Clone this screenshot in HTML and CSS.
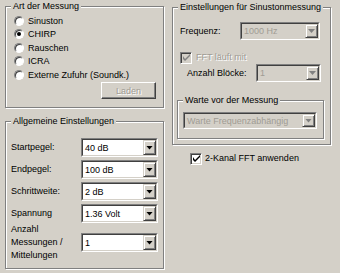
FILE: index.html
```html
<!DOCTYPE html>
<html lang="de">
<head>
<meta charset="utf-8">
<title>Messung</title>
<link rel="stylesheet" href="styles.css">
</head>
<body>
<div class="dialog">
  <div class="col col-left">
    <fieldset class="group g-art">
      <legend>Art der Messung</legend>
      <div class="radio-list">
        <div class="radio"><span class="rb"></span><span>Sinuston</span></div>
        <div class="radio"><span class="rb checked"></span><span>CHIRP</span></div>
        <div class="radio"><span class="rb"></span><span>Rauschen</span></div>
        <div class="radio"><span class="rb"></span><span>ICRA</span></div>
        <div class="radio"><span class="rb"></span><span>Externe Zufuhr (Soundk.)</span></div>
      </div>
      <div class="btn-row"><span class="button disabled">Laden</span></div>
    </fieldset>

    <fieldset class="group g-allg">
      <legend>Allgemeine Einstellungen</legend>
      <div class="form">
        <span class="lbl">Startpegel:</span>
        <div class="combo"><div class="ci"><span class="val">40 dB</span><span class="drop"><span class="arrow"></span></span></div></div>
        <span class="lbl">Endpegel:</span>
        <div class="combo"><div class="ci"><span class="val">100 dB</span><span class="drop"><span class="arrow"></span></span></div></div>
        <span class="lbl">Schrittweite:</span>
        <div class="combo"><div class="ci"><span class="val">2 dB</span><span class="drop"><span class="arrow"></span></span></div></div>
        <span class="lbl">Spannung</span>
        <div class="combo"><div class="ci"><span class="val">1.36 Volt</span><span class="drop"><span class="arrow"></span></span></div></div>
        <span class="lbl multi last">Anzahl<br>Messungen /<br>Mittelungen</span>
        <div class="combo last"><div class="ci"><span class="val">1</span><span class="drop"><span class="arrow"></span></span></div></div>
      </div>
    </fieldset>
  </div>

  <div class="col col-right">
    <fieldset class="group g-sinus">
      <legend>Einstellungen für Sinustonmessung</legend>
      <div class="sinus-body">
        <div class="row row-freq">
          <span class="lbl w-freq">Frequenz:</span>
          <div class="combo disabled c-freq"><div class="ci"><span class="val">1000 Hz</span><span class="drop"><span class="arrow"></span></span></div></div>
        </div>
        <div class="row row-fft">
          <span class="cb disabled"><svg viewBox="0 0 7 7" width="7" height="7"><path d="M0 2 L0 5 L2 7 L7 2 L7 0 L2 5 Z" class="tick"/></svg></span>
          <span class="lbl gray">FFT läuft mit</span>
        </div>
        <div class="row row-block">
          <span class="lbl w-block">Anzahl Blöcke:</span>
          <div class="combo disabled c-block"><div class="ci"><span class="val">1</span><span class="drop"><span class="arrow"></span></span></div></div>
        </div>
        <fieldset class="group g-warte">
          <legend>Warte vor der Messung</legend>
          <div class="warte-body">
            <div class="combo disabled c-warte"><div class="ci"><span class="val">Warte Frequenzabhängig</span><span class="drop"><span class="arrow"></span></span></div></div>
          </div>
        </fieldset>
      </div>
    </fieldset>
    <div class="check-2k">
      <span class="cb"><svg viewBox="0 0 7 7" width="7" height="7"><path d="M0 2 L0 5 L2 7 L7 2 L7 0 L2 5 Z" class="tick"/></svg></span>
      <span class="lbl">2-Kanal FFT anwenden</span>
    </div>
  </div>
</div>
</body>
</html>
```
FILE: styles.css
```css
html, body {
  margin: 0;
  padding: 0;
  background: #d4d0c8;
}
body {
  font-family: "Liberation Sans", Arial, sans-serif;
  font-size: 9px;
  color: #000;
  width: 340px;
  height: 273px;
  overflow: hidden;
}
.dialog {
  display: flex;
  align-items: flex-start;
  padding-left: 5px;
  gap: 8px;
}
.col {
  display: flex;
  flex-direction: column;
  width: 159px;
}

/* etched group box */
.group {
  margin: 0;
  padding: 0;
  min-width: 0;
  border: 1px solid #808080;
  box-shadow: inset 1px 1px 0 #fff, 1px 1px 0 #fff;
}
.group > legend {
  margin-left: 5px;
  padding: 0 2px;
  line-height: 13px;
  height: 13px;
  background: #d4d0c8;
}

/* Art der Messung */
.radio-list {
  padding: 1px 0 0 8px;
}
.radio {
  display: flex;
  align-items: center;
  gap: 4px;
  height: 13.5px;
  line-height: 12px;
}
.rb {
  width: 10px;
  height: 10px;
  box-sizing: border-box;
  border-radius: 50%;
  border: 1px solid;
  border-color: #808080 #fff #fff #808080;
  box-shadow: inset 1px 1px 0 #404040;
  background: #fff;
  display: flex;
  align-items: center;
  justify-content: center;
  flex: none;
}
.rb.checked::after {
  content: "";
  width: 4px;
  height: 4px;
  border-radius: 50%;
  background: #000;
}
.btn-row {
  display: flex;
  justify-content: flex-end;
  padding: 0 7px 8px 0;
  margin-top: 0.5px;
}
.button {
  width: 55px;
  height: 17px;
  box-sizing: border-box;
  border: 1px solid;
  border-color: #fff #404040 #404040 #fff;
  box-shadow: inset -1px -1px 0 #808080;
  display: flex;
  align-items: center;
  justify-content: center;
}
.button.disabled {
  color: #a09c94;
  text-shadow: 1px 1px 0 #fff;
}

/* Allgemeine Einstellungen */
.g-allg {
  margin-top: 7px;
}
.form {
  display: grid;
  grid-template-columns: 70px 77px;
  row-gap: 3px;
  align-items: center;
  padding: 10px 5px 6px 5px;
}
.lbl {
  line-height: 13px;
  white-space: nowrap;
}
.form .last {
  margin-top: -3px;
}

/* combo box */
.combo {
  height: 19px;
  box-sizing: border-box;
  border: 1px solid;
  border-color: #808080 #fff #fff #808080;
  background: #fff;
  display: flex;
}
.ci {
  flex: 1;
  min-width: 0;
  display: flex;
  border: 1px solid;
  border-color: #404040 #d4d0c8 #d4d0c8 #404040;
}
.val {
  flex: 1;
  min-width: 0;
  padding-left: 2px;
  align-self: center;
  line-height: 12px;
  white-space: nowrap;
  overflow: hidden;
}
.drop {
  width: 13px;
  flex: none;
  box-sizing: border-box;
  border: 1px solid;
  border-color: #d4d0c8 #404040 #404040 #d4d0c8;
  box-shadow: inset 1px 1px 0 #fff, inset -1px -1px 0 #808080;
  background: #d4d0c8;
  display: flex;
  align-items: center;
  justify-content: center;
}
.arrow {
  width: 7px;
  height: 4px;
  background: #000;
  clip-path: polygon(0 0, 100% 0, 50% 100%);
}
.combo.disabled {
  background: #d4d0c8;
}
.combo.disabled .val {
  color: #a09c94;
}
.combo.disabled .arrow {
  background: #808080;
}

/* Sinus group */
.g-sinus {
  margin-top: 1px;
}
.sinus-body {
  display: flex;
  flex-direction: column;
  padding: 8px 6px 5px 4px;
}
.row {
  display: flex;
  align-items: center;
}
.w-freq {
  width: 60px;
  padding-left: 3px;
}
.c-freq {
  width: 80px;
  height: 18px;
}
.row-fft {
  margin-top: 11px;
  gap: 4px;
  padding-left: 3px;
  height: 13px;
}
.lbl.gray {
  color: #a09c94;
  text-shadow: 1px 1px 0 #fff;
}
.w-block {
  width: 69px;
  padding-left: 10px;
}
.c-block {
  width: 65px;
  height: 18px;
}
.g-warte {
  margin-top: 12px;
  width: 147px;
  box-sizing: border-box;
}
.warte-body {
  padding: 5px 6px 9px 5px;
}
.c-warte {
  width: 134px;
  height: 17px;
}

/* check boxes */
.cb {
  width: 12px;
  height: 12px;
  box-sizing: border-box;
  border: 1px solid;
  border-color: #808080 #fff #fff #808080;
  box-shadow: inset 1px 1px 0 #404040, inset -1px -1px 0 #d4d0c8;
  background: #fff;
  display: flex;
  align-items: center;
  justify-content: center;
  flex: none;
}
.cb .tick {
  fill: #000;
}
.cb.disabled {
  background: #d4d0c8;
}
.cb.disabled .tick {
  fill: #808080;
}
.check-2k {
  display: flex;
  align-items: center;
  gap: 3px;
  margin: 7px 0 0 18px;
}
```
